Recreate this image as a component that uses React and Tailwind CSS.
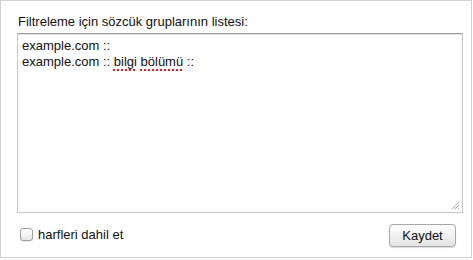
import React, { useState } from "react";

function ResizeGrip() {
  return (
    <svg
      className="absolute right-[2px] bottom-[2px]"
      width="10"
      height="10"
      viewBox="0 0 10 10"
    >
      <path d="M9 2 L2 9 M9 5 L5 9 M9 8 L8 9" stroke="#a8a8a8" strokeWidth="1" />
    </svg>
  );
}

export default function App() {
  const [checked, setChecked] = useState(false);

  return (
    <div
      className="w-[472px] h-[258px] border border-[#d0d0d0] bg-white text-[13px] text-[#111] px-[16px]"
      style={{ fontFamily: "'Liberation Sans', Arial, sans-serif" }}
    >
      <div className="pt-[14px] pb-[4px] leading-[14px] pl-[1px]">
        Filtreleme için sözcük gruplarının listesi:
      </div>

      <div className="relative h-[180px] w-[446px] border border-[#c8c8c8] border-t-[#9a9a9a] shadow-[inset_0_1px_1px_rgba(0,0,0,0.12)] px-[4px] pt-[4px] leading-[16px]">
        <div>example.com ::</div>
        <div>
          example.com ::{" "}
          <span className="underline decoration-dotted decoration-[#e02020] decoration-2 underline-offset-[3px]">
            bilgi
          </span>{" "}
          <span className="underline decoration-dotted decoration-[#e02020] decoration-2 underline-offset-[3px]">
            bölümü
          </span>{" "}
          ::
        </div>
        <ResizeGrip />
      </div>

      <div className="flex items-start justify-between mt-[11px]">
        <label className="flex items-center gap-[5px] pl-[3px] mt-[4px] leading-[13px]">
          <span
            onClick={() => setChecked(!checked)}
            className="w-[13px] h-[13px] rounded-[3px] border border-[#a0a0a0] bg-gradient-to-b from-white to-[#e6e6e6] shadow-[0_1px_1px_rgba(0,0,0,0.1)]"
          />
          <span>harfleri dahil et</span>
        </label>
        <button className="h-[23px] w-[67px] mr-[-1px] rounded-[4px] border border-[#a6a6a6] bg-gradient-to-b from-white to-[#e4e4e4] shadow-[0_1px_1px_rgba(0,0,0,0.15)] text-[13px] leading-none">
          Kaydet
        </button>
      </div>
    </div>
  );
}
